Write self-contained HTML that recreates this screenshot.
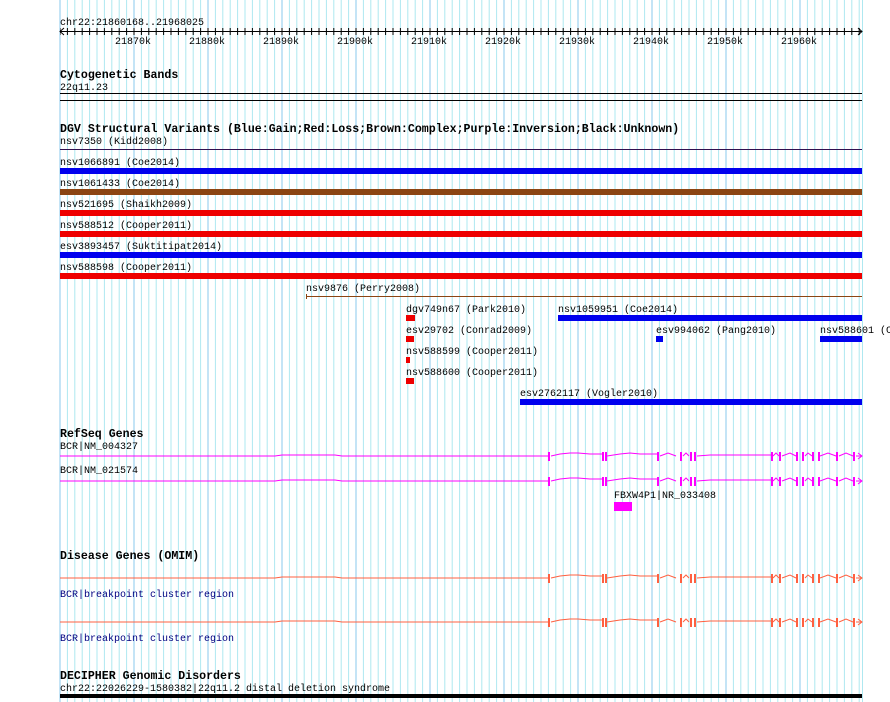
<!DOCTYPE html>
<html><head><meta charset="utf-8"><style>
html,body{margin:0;padding:0;background:#fff;width:890px;height:702px;overflow:hidden}
svg{display:block}
text{font-family:"Liberation Mono",monospace;font-size:10px;fill:#000}
.h{font-weight:bold;font-size:11.6px}
</style></head><body>
<svg width="890" height="702" viewBox="0 0 890 702" xmlns="http://www.w3.org/2000/svg">
<defs>
<pattern id="g" x="59.5" y="0" width="74" height="702" patternUnits="userSpaceOnUse">
<rect x="0" y="0" width="1" height="702" fill="#88c8ec"/>
<rect x="7.4" y="0" width="1" height="702" fill="#aee8f0"/>
<rect x="14.8" y="0" width="1" height="702" fill="#aee8f0"/>
<rect x="22.2" y="0" width="1" height="702" fill="#aee8f0"/>
<rect x="29.6" y="0" width="1" height="702" fill="#aee8f0"/>
<rect x="37" y="0" width="1" height="702" fill="#aee8f0"/>
<rect x="44.4" y="0" width="1" height="702" fill="#aee8f0"/>
<rect x="51.8" y="0" width="1" height="702" fill="#aee8f0"/>
<rect x="59.2" y="0" width="1" height="702" fill="#aee8f0"/>
<rect x="66.6" y="0" width="1" height="702" fill="#aee8f0"/>
</pattern>
<pattern id="t" x="59.5" y="0" width="7.4" height="10" patternUnits="userSpaceOnUse">
<rect x="0" y="0" width="1" height="10" fill="#000"/>
</pattern>
<g id="gene">
<path d="M60 0 H275 L282 -1 H335 L342 0 H548 M551 0 L560 -2 L570 -3 H578 L590 -2 H602 M607 0 L620 -2 L630 -3 L640 -2 H657 M660 0 L668 -3 L676 0 M683 0 L686 -3 L689 0 M697 0 L710 -1 H740 L750 -1 H771 M773 0 L776 -3 L779 0 M782 0 L790 -3 L796 0 M805 0 L808 -3 L812 0 M820 0 L828 -3 L836 0 M839 0 L846 -3 L853 0 M856 0 L862 0 M858 -3 L862 0 L858 3" fill="none" stroke="currentColor" stroke-width="1"/>
<g fill="currentColor">
<rect x="548" y="-4" width="2" height="9"/><rect x="602" y="-4" width="2" height="9"/><rect x="605" y="-4" width="2" height="9"/>
<rect x="657" y="-4" width="2" height="9"/><rect x="680" y="-4" width="2" height="9"/><rect x="690" y="-4" width="2" height="9"/>
<rect x="694" y="-4" width="2" height="9"/><rect x="771" y="-4" width="2" height="9"/><rect x="779" y="-4" width="2" height="9"/>
<rect x="796" y="-4" width="2" height="9"/><rect x="802" y="-4" width="2" height="9"/><rect x="812" y="-4" width="2" height="9"/>
<rect x="818" y="-4" width="2" height="9"/><rect x="836" y="-4" width="2" height="9"/><rect x="853" y="-4" width="2" height="9"/>
</g>
</g>
</defs>
<rect x="59" y="0" width="804" height="702" fill="url(#g)"/>
<rect x="862" y="0" width="1" height="702" fill="#aee8f0"/>

<text x="60" y="25">chr22:21860168..21968025</text>
<rect x="60" y="31" width="802" height="1" fill="#000"/>
<rect x="60" y="28" width="802" height="7" fill="url(#t)"/>
<path d="M64 28 L60 31.5 L64 35 M858 28 L862 31.5 L858 35" fill="none" stroke="#000"/>
<text x="115" y="44">21870k</text><text x="189" y="44">21880k</text><text x="263" y="44">21890k</text>
<text x="337" y="44">21900k</text><text x="411" y="44">21910k</text><text x="485" y="44">21920k</text>
<text x="559" y="44">21930k</text><text x="633" y="44">21940k</text><text x="707" y="44">21950k</text><text x="781" y="44">21960k</text>

<text class="h" x="60" y="78">Cytogenetic Bands</text>
<text x="60" y="90">22q11.23</text>
<rect x="60" y="93" width="802" height="1" fill="#000"/>
<rect x="60" y="100" width="802" height="1" fill="#000"/>

<text class="h" x="60" y="132">DGV Structural Variants (Blue:Gain;Red:Loss;Brown:Complex;Purple:Inversion;Black:Unknown)</text>
<text x="60" y="144">nsv7350 (Kidd2008)</text>
<rect x="60" y="149" width="802" height="1" fill="#301050"/>
<text x="60" y="165">nsv1066891 (Coe2014)</text>
<rect x="60" y="168" width="802" height="6" fill="#0000ee"/>
<text x="60" y="186">nsv1061433 (Coe2014)</text>
<rect x="60" y="189" width="802" height="6" fill="#8b4513"/>
<text x="60" y="207">nsv521695 (Shaikh2009)</text>
<rect x="60" y="210" width="802" height="6" fill="#ee0000"/>
<text x="60" y="228">nsv588512 (Cooper2011)</text>
<rect x="60" y="231" width="802" height="6" fill="#ee0000"/>
<text x="60" y="249">esv3893457 (Suktitipat2014)</text>
<rect x="60" y="252" width="802" height="6" fill="#0000ee"/>
<text x="60" y="270">nsv588598 (Cooper2011)</text>
<rect x="60" y="273" width="802" height="6" fill="#ee0000"/>
<text x="306" y="291">nsv9876 (Perry2008)</text>
<rect x="306" y="296" width="556" height="1" fill="#8b4513"/>
<rect x="306" y="294" width="1" height="5" fill="#8b4513"/>
<text x="406" y="312">dgv749n67 (Park2010)</text>
<rect x="406" y="315" width="9" height="6" fill="#ee0000"/>
<text x="558" y="312">nsv1059951 (Coe2014)</text>
<rect x="558" y="315" width="304" height="6" fill="#0000ee"/>
<text x="406" y="333">esv29702 (Conrad2009)</text>
<rect x="406" y="336" width="8" height="6" fill="#ee0000"/>
<text x="656" y="333">esv994062 (Pang2010)</text>
<rect x="656" y="336" width="7" height="6" fill="#0000ee"/>
<text x="820" y="333">nsv588601 (Cooper2011)</text>
<rect x="820" y="336" width="42" height="6" fill="#0000ee"/>
<text x="406" y="354">nsv588599 (Cooper2011)</text>
<rect x="406" y="357" width="4" height="6" fill="#ee0000"/>
<text x="406" y="375">nsv588600 (Cooper2011)</text>
<rect x="406" y="378" width="8" height="6" fill="#ee0000"/>
<text x="520" y="396">esv2762117 (Vogler2010)</text>
<rect x="520" y="399" width="342" height="6" fill="#0000ee"/>

<text class="h" x="60" y="437">RefSeq Genes</text>
<text x="60" y="449">BCR|NM_004327</text>
<use href="#gene" x="0" y="456" style="color:#ff00ff"/>
<text x="60" y="473">BCR|NM_021574</text>
<use href="#gene" x="0" y="481" style="color:#ff00ff"/>
<text x="614" y="498">FBXW4P1|NR_033408</text>
<rect x="614" y="502" width="18" height="9" fill="#ff00ff"/>

<text class="h" x="60" y="559">Disease Genes (OMIM)</text>
<use href="#gene" x="0" y="578" style="color:#ff6040"/>
<text x="60" y="597" style="fill:#000080">BCR|breakpoint cluster region</text>
<use href="#gene" x="0" y="622" style="color:#ff6040"/>
<text x="60" y="641" style="fill:#000080">BCR|breakpoint cluster region</text>

<text class="h" x="60" y="679">DECIPHER Genomic Disorders</text>
<text x="60" y="691">chr22:22026229-1580382|22q11.2 distal deletion syndrome</text>
<rect x="60" y="694" width="802" height="4" fill="#000"/>
</svg>
</body></html>
